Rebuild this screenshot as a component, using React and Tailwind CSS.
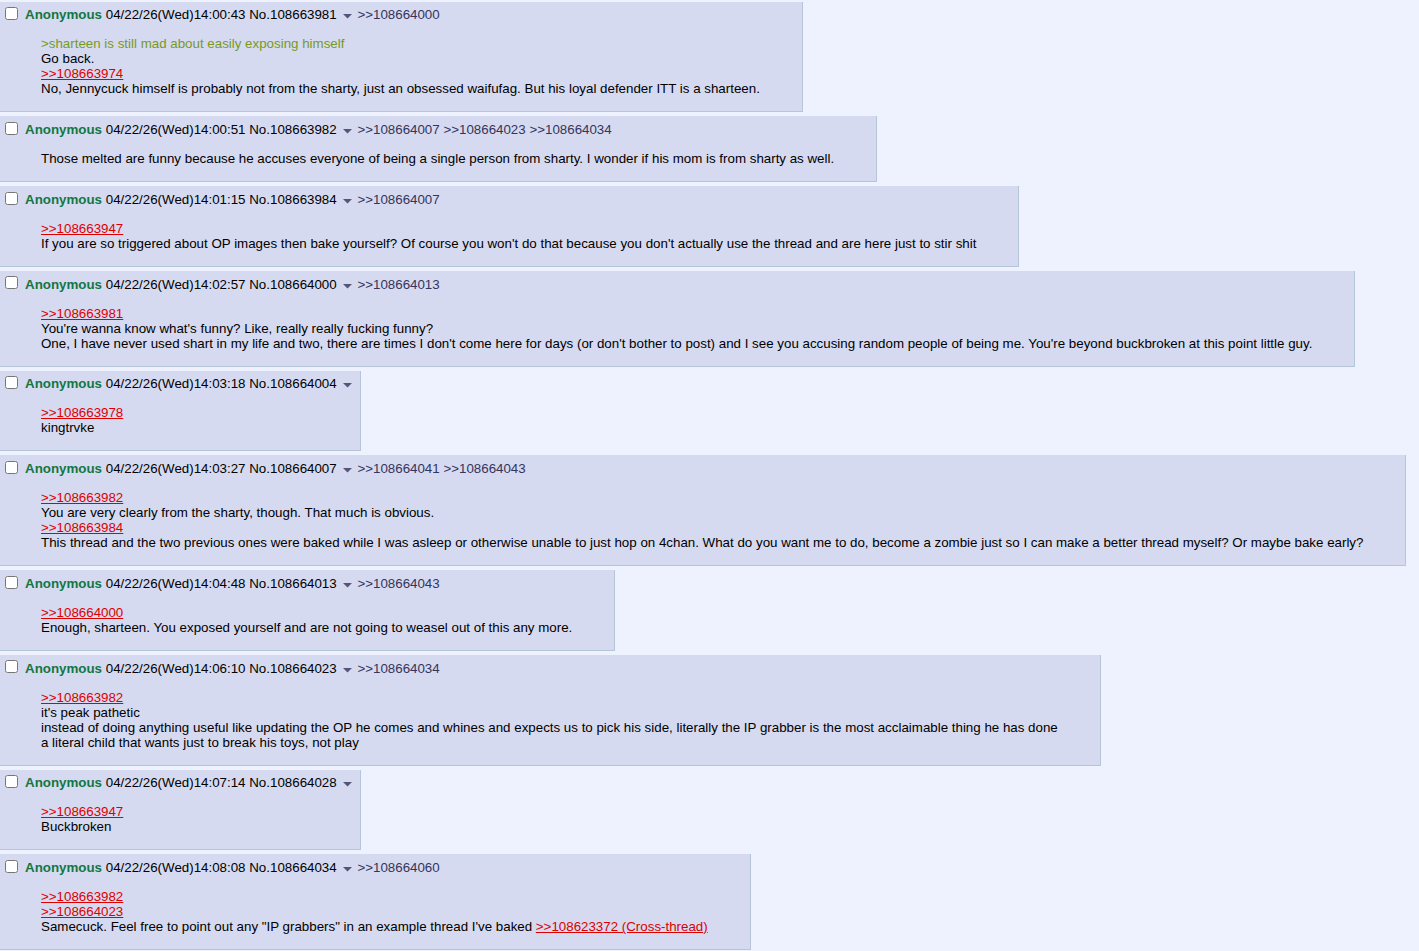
import React from 'react';

const posts = [
    {
        no: '108663981',
        time: '14:00:43',
        backlinks: ['108664000'],
        lines: [
            [{ t: 'green', v: '>sharteen is still mad about easily exposing himself' }],
            [{ t: 'text', v: 'Go back.' }],
            [{ t: 'link', v: '>>108663974' }],
            [{ t: 'text', v: 'No, Jennycuck himself is probably not from the sharty, just an obsessed waifufag. But his loyal defender ITT is a sharteen.' }],
        ],
    },
    {
        no: '108663982',
        time: '14:00:51',
        backlinks: ['108664007', '108664023', '108664034'],
        lines: [
            [{ t: 'text', v: 'Those melted are funny because he accuses everyone of being a single person from sharty. I wonder if his mom is from sharty as well.' }],
        ],
    },
    {
        no: '108663984',
        time: '14:01:15',
        backlinks: ['108664007'],
        lines: [
            [{ t: 'link', v: '>>108663947' }],
            [{ t: 'text', v: "If you are so triggered about OP images then bake yourself? Of course you won't do that because you don't actually use the thread and are here just to stir shit" }],
        ],
    },
    {
        no: '108664000',
        time: '14:02:57',
        backlinks: ['108664013'],
        lines: [
            [{ t: 'link', v: '>>108663981' }],
            [{ t: 'text', v: "You're wanna know what's funny? Like, really really fucking funny?" }],
            [{ t: 'text', v: "One, I have never used shart in my life and two, there are times I don't come here for days (or don't bother to post) and I see you accusing random people of being me. You're beyond buckbroken at this point little guy." }],
        ],
    },
    {
        no: '108664004',
        time: '14:03:18',
        backlinks: [],
        lines: [
            [{ t: 'link', v: '>>108663978' }],
            [{ t: 'text', v: 'kingtrvke' }],
        ],
    },
    {
        no: '108664007',
        time: '14:03:27',
        backlinks: ['108664041', '108664043'],
        lines: [
            [{ t: 'link', v: '>>108663982' }],
            [{ t: 'text', v: 'You are very clearly from the sharty, though. That much is obvious.' }],
            [{ t: 'link', v: '>>108663984' }],
            [{ t: 'text', v: 'This thread and the two previous ones were baked while I was asleep or otherwise unable to just hop on 4chan. What do you want me to do, become a zombie just so I can make a better thread myself? Or maybe bake early?' }],
        ],
    },
    {
        no: '108664013',
        time: '14:04:48',
        backlinks: ['108664043'],
        lines: [
            [{ t: 'link', v: '>>108664000' }],
            [{ t: 'text', v: 'Enough, sharteen. You exposed yourself and are not going to weasel out of this any more.' }],
        ],
    },
    {
        no: '108664023',
        time: '14:06:10',
        backlinks: ['108664034'],
        lines: [
            [{ t: 'link', v: '>>108663982' }],
            [{ t: 'text', v: "it's peak pathetic" }],
            [{ t: 'text', v: 'instead of doing anything useful like updating the OP he comes and whines and expects us to pick his side, literally the IP grabber is the most acclaimable thing he has done' }],
            [{ t: 'text', v: 'a literal child that wants just to break his toys, not play' }],
        ],
    },
    {
        no: '108664028',
        time: '14:07:14',
        backlinks: [],
        lines: [
            [{ t: 'link', v: '>>108663947' }],
            [{ t: 'text', v: 'Buckbroken' }],
        ],
    },
    {
        no: '108664034',
        time: '14:08:08',
        backlinks: ['108664060'],
        lines: [
            [{ t: 'link', v: '>>108663982' }],
            [{ t: 'link', v: '>>108664023' }],
            [
                { t: 'text', v: 'Samecuck. Feel free to point out any "IP grabbers" in an example thread I\'ve baked ' },
                { t: 'link', v: '>>108623372 (Cross-thread)' },
            ],
        ],
    },
];

const Segment = ({ seg }) => {
    if (seg.t === 'green') return <span className="text-[#789922]">{seg.v}</span>;
    if (seg.t === 'link') return <a className="text-[#dd0000] underline">{seg.v}</a>;
    return <span>{seg.v}</span>;
};

const Reply = ({ post }) => (
    <div className="w-fit bg-[#d6daf0] border-r border-b border-[#b7c5d9] pl-[1px] pr-[2px] py-[2px]">
        <div className="flex items-start h-[19.75px]">
            <input type="checkbox" className="w-[13px] h-[13px] mt-[3.5px] ml-[4px] mr-[7px] shrink-0" />
            <div className="pt-[3.75px] leading-[15px] whitespace-nowrap">
                <span className="font-bold text-[#117743]">Anonymous</span>{' '}
                <span>04/22/26(Wed){post.time}</span>{' '}
                <span>No.{post.no}</span>
                <span className="inline-flex items-center justify-center w-[13px] h-[13px] ml-[4px] align-[0px] opacity-80">
                    <svg width="9" height="5" viewBox="0 0 9 5">
                        <path d="M0 0 H9 L4.5 4.5 Z" fill="#34345c" />
                    </svg>
                </span>
                {post.backlinks.length === 0 && <span className="inline-block w-[4px]" />}
                {post.backlinks.map((b) => (
                    <span key={b} className="text-[#34345c]">{' '}&gt;&gt;{b}</span>
                ))}
            </div>
        </div>
        <div className="mx-[40px] my-[13px] leading-[15px] whitespace-nowrap">
            {post.lines.map((line, i) => (
                <div key={i}>
                    {line.map((seg, j) => (
                        <Segment key={j} seg={seg} />
                    ))}
                </div>
            ))}
        </div>
    </div>
);

export default function App() {
    return (
        <div
            className="min-h-screen bg-[#eef2ff] text-black text-[13.333px] pt-[1.5px]"
            style={{ fontFamily: 'Arial, "Liberation Sans", Helvetica, sans-serif' }}
        >
            <div className="flex flex-col gap-[4px]">
                {posts.map((p) => (
                    <Reply key={p.no} post={p} />
                ))}
            </div>
        </div>
    );
}
